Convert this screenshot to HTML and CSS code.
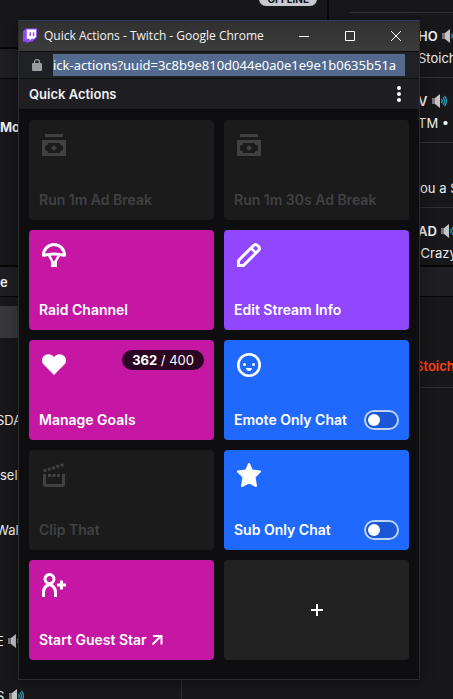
FILE: index.html
```
<!DOCTYPE html>
<html lang="en">
<head>
<meta charset="utf-8">
<title>Quick Actions - Twitch</title>
<link rel="stylesheet" href="styles.css">
</head>
<body>
<svg class="defs" aria-hidden="true">
  <symbol id="speaker" viewBox="0 0 16 16">
    <path fill="#77777b" d="M1 5h4v6H1z"/><path fill="#c4c4c6" d="M4 5l5-4v14l-5-4z"/>
    <path fill="none" stroke="#2b9bb5" stroke-width="1.3" d="M10.5 6q1.5 2 0 4M12 4.300q3 3.700 0 7.400M13.500 2.800q4 5.200 0 10.400"/>
  </symbol>
  <symbol id="cash" viewBox="0 0 30 30">
    <path fill="currentColor" fill-rule="evenodd" d="M6 4h18v3H6zM3 10h24v16H3zM9 13v1.500L6 16v4l3 1.500V23h12v-1.500l3-1.500v-4l-3-1.500V13zM15 15l3 3-3 3-3-3z"/>
  </symbol>
</svg>

<main class="dashboard">
  <section class="side">
    <div class="side-top"></div>
    <div class="panel-head"></div>
    <div class="side-block"><b>Mo</b></div>
    <div class="panel-head">e</div>
    <div class="side-list">
      <div class="selected"></div>
      <p class="line cut">SDA</p>
      <p class="line">sel</p>
      <p class="line cut">Wal</p>
      <p class="line far cut">E <svg class="speaker"><use href="#speaker"/></svg></p>
      <p class="line cut">S <svg class="speaker"><use href="#speaker"/></svg></p>
    </div>
  </section>
  <section class="stage"><span class="status">OFFLINE</span></section>
  <section class="feed">
    <div class="event first"></div>
    <div class="event"><b>HO <svg class="speaker"><use href="#speaker"/></svg></b><span>Stoich</span></div>
    <div class="event"><b>V <svg class="speaker"><use href="#speaker"/></svg></b><span>TM •</span></div>
    <div class="event single"><span class="under">you a S</span></div>
    <div class="event last"><b>AD <svg class="speaker"><use href="#speaker"/></svg></b><span class="under">eCrazy</span></div>
    <div class="panel-head"></div>
    <div class="event chat"><b>Stoich</b></div>
  </section>
</main>

<div class="window">
  <header class="titlebar">
    <svg class="logo" viewBox="0 0 16 16"><path fill="#9146ff" d="M3 0h12v9l-5 5H7l-3 2v-2H0V3z"/><path fill="#fff" d="M4 1h10v7.500L12 11H9l-2 2v-2H4z"/><path fill="#9146ff" d="M7 4h1.500v4H7zM10.500 4H12v4h-1.500z"/></svg>
    <h1>Quick Actions - Twitch - Google Chrome</h1>
    <button class="win-btn" aria-label="Minimize"><svg viewBox="0 0 12 12"><path d="M1 6.500h10"/></svg></button>
    <button class="win-btn" aria-label="Maximize"><svg viewBox="0 0 12 12"><path d="M1.500 1.500h9v9h-9z"/></svg></button>
    <button class="win-btn" aria-label="Close"><svg viewBox="0 0 12 12"><path d="M1 1l10 10M11 1L1 11"/></svg></button>
  </header>
  <div class="address">
    <svg class="lock" viewBox="0 0 10 12"><path fill="#9a9da1" d="M1 4h8q1 0 1 1v6q0 1-1 1H1q-1 0-1-1V5q0-1 1-1z"/><path fill="none" stroke="#9a9da1" stroke-width="1.300" d="M2.500 5V3a2.500 2.300 0 0 1 5 0v2"/></svg>
    <input type="text" aria-label="Address" value="ick-actions?uuid=3c8b9e810d044e0a0e1e9e1b0635b51a" readonly>
  </div>
  <div class="toolbar">
    <h2>Quick Actions</h2>
    <button class="more" aria-label="More"><svg viewBox="0 0 4 16"><circle cx="2" cy="2" r="2"/><circle cx="2" cy="8" r="2"/><circle cx="2" cy="14" r="2"/></svg></button>
  </div>
  <div class="actions">
    <button class="card off" disabled>
      <svg class="icon"><use href="#cash"/></svg><span class="label">Run 1m Ad Break</span>
    </button>
    <button class="card off" disabled>
      <svg class="icon"><use href="#cash"/></svg><span class="label">Run 1m 30s Ad Break</span>
    </button>
    <button class="card pink">
      <svg class="icon" viewBox="0 0 30 30"><g fill="none" stroke="currentColor" stroke-width="3"><path d="M4.500 16.500V15a10.500 10.500 0 0 1 21 0v1.500M4.500 15.500q5-1.500 10.500-1.500t10.500 1.500"/><path stroke-width="2.500" d="M9.500 14.500l4.500 8M20.500 14.500l-4.500 8"/></g><path fill="currentColor" d="M12 21h6v6h-6z"/></svg>
      <span class="label">Raid Channel</span>
    </button>
    <button class="card purple">
      <svg class="icon" viewBox="0 0 30 30"><g fill="none" stroke="currentColor" stroke-width="3" stroke-linejoin="round"><path stroke-linejoin="miter" d="M4.500 25.500v-5L19.500 5.500q2-2 4 0l1 1q2 2 0 4L9.500 25.500z"/><path stroke-width="2.500" d="M17 8l5 5"/></g></svg>
      <span class="label">Edit Stream Info</span>
    </button>
    <button class="card pink">
      <svg class="icon" viewBox="0 0 30 30"><path fill="currentColor" d="M15 25L4.600 14.600a6.200 6.200 0 0 1 0-8.400C7 3.500 11.500 3.500 14 6l1 1 1-1c2.500-2.500 7-2.500 9.400.2a6.200 6.200 0 0 1 0 8.400z"/></svg>
      <span class="badge"><b>362</b> / 400</span>
      <span class="label">Manage Goals</span>
    </button>
    <label class="card blue">
      <svg class="icon" viewBox="0 0 30 30"><circle cx="15" cy="15" r="10.700" fill="none" stroke="currentColor" stroke-width="2.600"/><circle cx="10.500" cy="14.500" r="1.500" fill="currentColor"/><circle cx="19.500" cy="14.500" r="1.500" fill="currentColor"/><path fill="currentColor" d="M12 18h6q-.5 3-3 3t-3-3z"/></svg>
      <span class="label">Emote Only Chat</span><input type="checkbox" class="toggle">
    </label>
    <button class="card off" disabled>
      <svg class="icon" viewBox="0 0 30 30"><g fill="none" stroke="currentColor" stroke-width="3"><path stroke-dasharray="3 1.500" d="M4.500 11L25 4.500"/><path stroke-dasharray="3 1.500" d="M9 15.500h13"/><path stroke-linejoin="round" d="M5.500 14v10.500q0 1 1 1h17q1 0 1-1V14"/></g></svg>
      <span class="label">Clip That</span>
    </button>
    <label class="card blue">
      <svg class="icon" viewBox="0 0 30 30"><path fill="currentColor" stroke="currentColor" stroke-width="2" stroke-linejoin="round" d="M15 4l3 6.600 8 .9-5.500 5.500 1.500 9-7-3.700L8 26l1.500-9L4 11.500l8-.9z"/></svg>
      <span class="label">Sub Only Chat</span><input type="checkbox" class="toggle">
    </label>
    <button class="card pink">
      <svg class="icon" viewBox="0 0 30 30"><g fill="none" stroke="currentColor" stroke-width="3"><circle cx="10.500" cy="9" r="4.500"/><path d="M4.500 27v-5q0-4 3.500-6.500l2.500-1 2.500 1q3.500 2.500 3.500 6.500v5M22.500 10.500v9M18 15h9"/></g></svg>
      <span class="label">Start Guest Star <svg class="arrow" viewBox="0 0 12 12"><path d="M2 2h8.500v8.500M10.500 1.500L1.500 10.500"/></svg></span>
    </button>
    <button class="card add" aria-label="Add action"><svg class="plus" viewBox="0 0 14 14"><path d="M7 1v12M1 7h12"/></svg></button>
  </div>
</div>
</body>
</html>
```
FILE: styles.css
```
* { box-sizing: border-box; }
body {
  margin: 0;
  min-height: 100vh;
  position: relative;
  overflow: hidden;
  background: #18181b;
  color: #efeff1;
  font: 13px/20px Inter, "Liberation Sans", sans-serif;
}
h1, h2, p { margin: 0; }
button { font: inherit; color: inherit; border: 0; padding: 0; background: none; }
.defs { position: absolute; width: 0; height: 0; }

.dashboard {
  display: grid;
  grid-template-columns: 182px 1fr 126px;
  height: 100vh;
  overflow: hidden;
  white-space: nowrap;
}
.side-top { height: 47px; }
.panel-head {
  height: 32px;
  padding-top: 5px;
  background: #1f1f23;
  border-top: 2px solid #060607;
  border-bottom: 1px solid #060607;
  font-weight: 600;
}
.side-block { height: 186px; padding-top: 38px; }
.side-list { min-height: 100%; padding-top: 9px; border-right: 1px solid #303033; }
.selected { height: 32px; margin-bottom: 72px; background: #38383b; }
.line { margin-bottom: 35px; }
.cut { margin-left: -4px; }
.far { margin-top: 91px; }
.speaker { width: 16px; height: 16px; vertical-align: -3px; }
.stage { display: flex; justify-content: flex-end; align-items: flex-start; padding-right: 10px; }
.status {
  margin-top: -8px;
  padding: 0 8px;
  border-radius: 7px;
  background: #c8c8d0;
  color: #0e0e10;
  font-size: 10px;
  line-height: 14px;
  font-weight: 700;
}
.feed { background: linear-gradient(#0a0a0b, #0a0a0b) no-repeat 0 0 / 2px 265px; }
.event {
  height: 65px;
  margin-left: 22px;
  padding: 12px 0 0 69px;
  border-bottom: 1px solid #303033;
}
.event b, .event span { display: block; line-height: 22px; }
.event b { font-weight: 600; }
.first { height: 13px; padding: 0; }
.single { padding-top: 34px; }
.last { height: 57px; border-bottom: 0; }
.event .under { margin-left: -5px; }
.chat { height: 91px; padding: 58px 0 0 66px; color: #ff4012; }

.window {
  position: absolute;
  top: 20px;
  left: 18px;
  right: 33px;
  padding-bottom: 19px;
  background: #0e0e10;
  border: 1px solid #2c2c2e;
  border-top-color: #2d3c5c;
  box-shadow: 0 2px 12px #00000066;
}
.titlebar {
  display: flex;
  align-items: center;
  height: 31px;
  padding-left: 4px;
  background: linear-gradient(#303030, #3c3c3c);
  border-bottom: 1px solid #0c0c0c;
}
.titlebar h1 {
  flex: 1;
  padding-left: 6px;
  font: 12px/20px "Open Sans", "Noto Sans", sans-serif;
  color: #f2f2f2;
  white-space: nowrap;
}
.logo { width: 15px; height: 16px; }
.win-btn { width: 46px; height: 30px; display: grid; place-items: center; }
.win-btn svg { width: 12px; height: 12px; fill: none; stroke: #fff; stroke-width: 1; }
.address {
  display: flex;
  align-items: center;
  height: 27px;
  padding: 0 14px 0 13px;
  background: #202124;
  border-bottom: 1px solid #0c120c;
}
.lock { width: 10px; height: 12px; margin-right: 11px; flex: none; }
.address input {
  flex: 1;
  min-width: 0;
  height: 22px;
  border: 0;
  padding: 0;
  background: #536a8e;
  color: #fff;
  font: 13px/22px "Noto Sans", "Open Sans", sans-serif;
}
.toolbar {
  display: flex;
  justify-content: space-between;
  align-items: center;
  height: 31px;
  padding: 0 18px 0 10px;
  background: #1f1f23;
  border-bottom: 1px solid #09090a;
}
.toolbar h2 { font-size: 13px; font-weight: 600; }
.more { display: flex; }
.more svg { width: 4px; height: 16px; fill: #fff; }

.actions {
  display: grid;
  grid-template-columns: 1fr 1fr;
  grid-auto-rows: 100px;
  gap: 10px;
  padding: 10px 10px 0;
}
.card {
  display: grid;
  grid-template-columns: 1fr auto;
  align-content: space-between;
  align-items: start;
  padding: 10px;
  border-radius: 4px;
  text-align: left;
  font-size: 14px;
  font-weight: 600;
  line-height: 20px;
  color: #fff;
}
.off { background: #1b1b1c; color: #414143; }
.pink { background: #c517a3; grid-template-columns: auto auto; justify-content: space-between; }
.purple { background: #9146ff; }
.blue { background: #1f69ff; }
.add { background: #212122; place-content: center; grid-template-columns: auto; }
.icon { width: 30px; height: 30px; grid-column: 1; }
.label { grid-column: 1; white-space: nowrap; }
.pink .label { grid-column: 1 / -1; }
.badge {
  padding: 0 10px;
  border-radius: 10px;
  background: #2b0524;
  font-size: 13px;
  font-weight: 400;
  white-space: nowrap;
}
.badge b { font-weight: 700; }
.toggle {
  appearance: none;
  display: grid;
  align-items: center;
  width: 35px;
  height: 20px;
  margin: 0;
  padding: 0 2px;
  border: 2px solid #bcd2ff;
  border-radius: 10px;
  background: #1a57d6;
}
.toggle::before { content: ""; width: 12px; height: 12px; border-radius: 50%; background: #fff; }
.arrow { width: 12px; height: 12px; margin-left: 1px; vertical-align: -1px; fill: none; stroke: #fff; stroke-width: 2; }
.plus { width: 14px; height: 14px; fill: none; stroke: #fff; stroke-width: 2; }
```
